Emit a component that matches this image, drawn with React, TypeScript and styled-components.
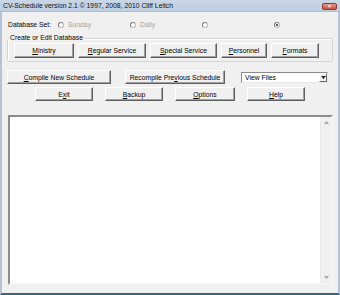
import React from 'react';
import styled, { createGlobalStyle } from 'styled-components';

const GlobalStyle = createGlobalStyle`
  html, body {
    margin: 0;
    padding: 0;
    background: #f0f0f0;
  }
  body {
    font-family: "Liberation Sans", Arial, sans-serif;
    font-size: 6.8px;
    color: #000;
  }
`;

const Window = styled.div`
  width: 340px;
  height: 295px;
  display: flex;
  flex-direction: column;
  background: #f0f0f0;
  overflow: hidden;
`;

const TitleBar = styled.div`
  height: 12px;
  flex: none;
  display: flex;
  align-items: center;
  justify-content: space-between;
  padding: 0 3px 0 3px;
  background: linear-gradient(to bottom, #c9d7e7, #bccde0);
  border-bottom: 1px solid #aebfd3;
  box-sizing: border-box;
`;

const Title = styled.span`
  font-size: 6.8px;
  line-height: 10px;
  color: #111;
  white-space: nowrap;
`;

const CloseButton = styled.div`
  width: 15px;
  height: 7px;
  margin-top: 1px;
  border-radius: 2px;
  background: linear-gradient(to bottom, #e49a88, #c8523f);
  border: 1px solid #8e3a30;
  box-sizing: border-box;
  display: flex;
  align-items: center;
  justify-content: center;
  color: #fff;
  font-size: 6px;
  font-weight: bold;
  line-height: 1;
`;

const Frame = styled.div`
  flex: 1;
  display: flex;
  flex-direction: column;
  border-left: 2px solid #b4c4d6;
  border-right: 2px solid #b4c4d6;
  border-bottom: 2px solid #2d6b7b;
  padding: 0 5px;
`;

const DbRow = styled.div`
  height: 9px;
  margin-top: 8px;
  display: flex;
  align-items: center;
  padding-left: 1px;
  line-height: 9px;
`;

const DbLabel = styled.span`
  width: 50px;
  flex: none;
`;

const RadioItem = styled.label<{ $w: number }>`
  width: ${(p) => p.$w}px;
  flex: none;
  display: flex;
  align-items: center;
  gap: 4px;
  color: #a3a3a3;
`;

const RadioDot = styled.span<{ $checked?: boolean }>`
  width: 6px;
  height: 6px;
  border-radius: 50%;
  border: 1px solid #b8b8b8;
  border-top-color: #7a7a7a;
  border-left-color: #7a7a7a;
  background: #fff;
  box-sizing: border-box;
  position: relative;
  &::after {
    content: '';
    display: ${(p) => (p.$checked ? 'block' : 'none')};
    position: absolute;
    left: 1px;
    top: 1px;
    width: 2px;
    height: 2px;
    border-radius: 50%;
    background: #222;
  }
`;

const Group = styled.fieldset`
  margin: 5px 0 0 0;
  padding: 0 6px 3px 6px;
  border: 1px solid #d5d5d5;
  box-shadow: inset 1px 1px 0 #fff;
  border-radius: 2px;
  min-width: 0;
`;

const Legend = styled.legend`
  padding: 0 1px;
  margin-left: -5px;
  line-height: 8px;
  font-size: 6.8px;
`;

const ButtonRow = styled.div<{ $gap: number; $indent?: number; $top: number }>`
  display: flex;
  align-items: center;
  gap: ${(p) => p.$gap}px;
  margin-top: ${(p) => p.$top}px;
  padding-left: ${(p) => p.$indent ?? 0}px;
`;

const Button = styled.button<{ $w: number; $h?: number }>`
  width: ${(p) => p.$w}px;
  height: ${(p) => p.$h ?? 15}px;
  flex: none;
  padding: 0;
  margin: 0;
  font-family: "Liberation Sans", Arial, sans-serif;
  font-size: 6.8px;
  color: #000;
  background: #f0f0f0;
  border: 1px solid;
  border-color: #ffffff #5f5f5f #5f5f5f #ffffff;
  box-shadow: inset -1px -1px 0 #a0a0a0;
  box-sizing: border-box;
  u {
    text-decoration: underline;
  }
`;

const Select = styled.div`
  width: 87px;
  height: 11px;
  flex: none;
  margin-left: 2px;
  display: flex;
  align-items: center;
  justify-content: space-between;
  background: #fff;
  border: 1px solid;
  border-color: #8a8a8a #e8e8e8 #e8e8e8 #8a8a8a;
  box-sizing: border-box;
  padding-left: 3px;
`;

const SelectArrow = styled.span`
  width: 8px;
  height: 9px;
  background: #f0f0f0;
  border: 1px solid;
  border-color: #fff #6a6a6a #6a6a6a #fff;
  box-sizing: border-box;
  display: flex;
  align-items: center;
  justify-content: center;
`;

const Output = styled.div`
  height: 170px;
  margin: 14px 0 0 1px;
  display: flex;
  background: #fff;
  border: 2px solid;
  border-color: #8c8c8c #f4f4f4 #f4f4f4 #8c8c8c;
  box-sizing: border-box;
`;

const OutputText = styled.div`
  flex: 1;
`;

const Scrollbar = styled.div`
  width: 10px;
  flex: none;
  display: flex;
  flex-direction: column;
  justify-content: space-between;
  align-items: center;
  background: #f0f0f0;
  border-left: 1px solid #e8e8e8;
  padding: 4px 0;
`;

const Triangle = ({ down, color }: { down?: boolean; color: string }) => (
  <svg width="5" height="3" viewBox="0 0 5 3">
    <path d={down ? 'M0 0 L5 0 L2.5 3 Z' : 'M0 3 L5 3 L2.5 0 Z'} fill={color} />
  </svg>
);

const App = () => {
  return (
    <>
      <GlobalStyle />
      <Window>
        <TitleBar>
          <Title>CV-Schedule version 2.1 © 1997, 2008, 2010 Cliff Leitch</Title>
          <CloseButton>×</CloseButton>
        </TitleBar>
        <Frame>
          <DbRow>
            <DbLabel>Database Set:</DbLabel>
            <RadioItem $w={72}>
              <RadioDot />
              Sunday
            </RadioItem>
            <RadioItem $w={72}>
              <RadioDot />
              Daily
            </RadioItem>
            <RadioItem $w={72}>
              <RadioDot />
            </RadioItem>
            <RadioItem $w={40}>
              <RadioDot $checked />
            </RadioItem>
          </DbRow>
          <Group>
            <Legend>Create or Edit Database</Legend>
            <ButtonRow $gap={4} $top={1}>
              <Button $w={60}><u>M</u>inistry</Button>
              <Button $w={68}><u>R</u>egular Service</Button>
              <Button $w={67}><u>S</u>pecial Service</Button>
              <Button $w={46}><u>P</u>ersonnel</Button>
              <Button $w={48}><u>F</u>ormats</Button>
            </ButtonRow>
          </Group>
          <ButtonRow $gap={14} $top={8}>
            <Button $w={104} $h={14}><u>C</u>ompile New Schedule</Button>
            <Button $w={100} $h={14}>Recompile Pre<u>v</u>ious Schedule</Button>
            <Select>
              View Files
              <SelectArrow>
                <Triangle down color="#222" />
              </SelectArrow>
            </Select>
          </ButtonRow>
          <ButtonRow $gap={12} $top={3} $indent={28}>
            <Button $w={58} $h={14}>E<u>x</u>it</Button>
            <Button $w={58} $h={14}><u>B</u>ackup</Button>
            <Button $w={60} $h={14}><u>O</u>ptions</Button>
            <Button $w={58} $h={14}><u>H</u>elp</Button>
          </ButtonRow>
          <Output>
            <OutputText />
            <Scrollbar>
              <Triangle color="#a8a8a8" />
              <Triangle down color="#a8a8a8" />
            </Scrollbar>
          </Output>
        </Frame>
      </Window>
    </>
  );
};

export default App;
